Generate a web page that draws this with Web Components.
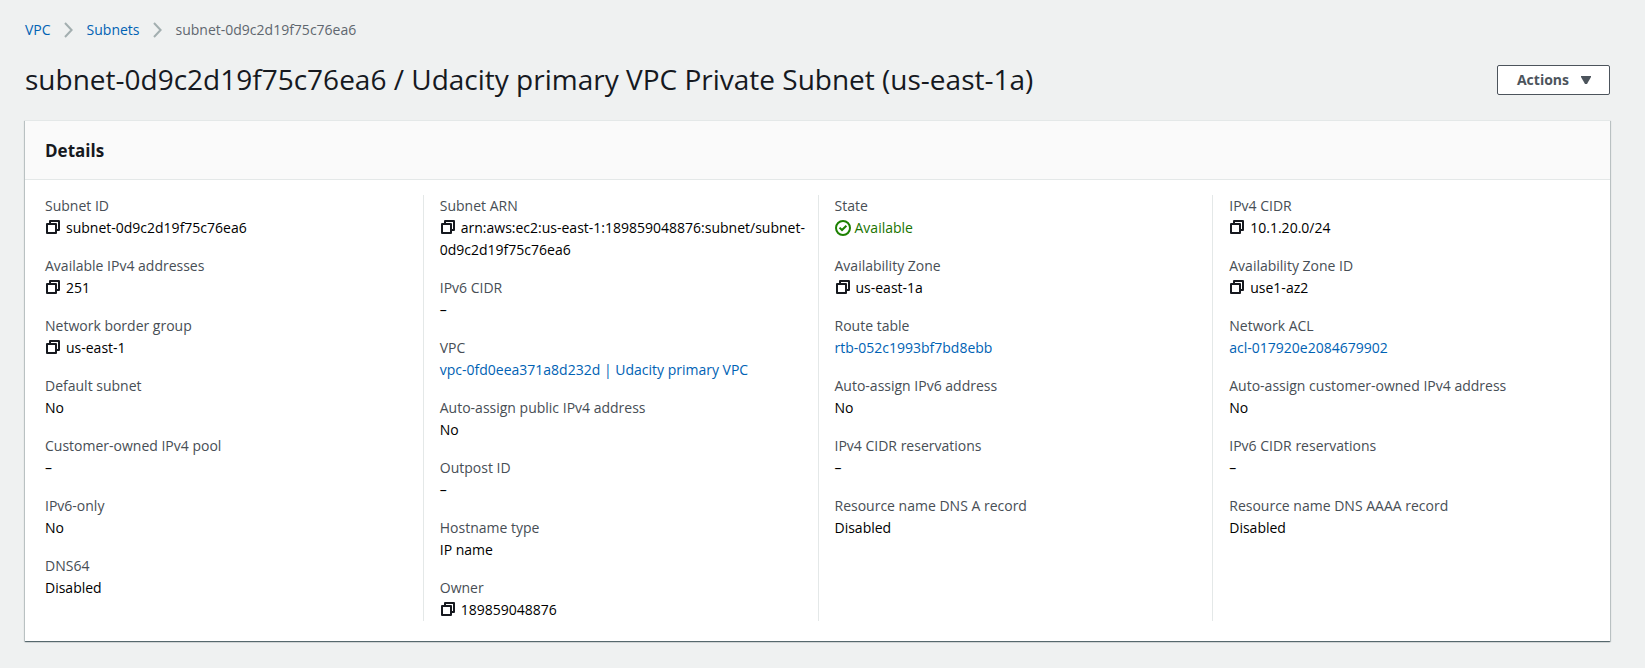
<!DOCTYPE html>
<html lang="en">
<head>
<meta charset="utf-8">
<title>Subnet details</title>
<style>
  body {
    margin: 0;
    background: #eff1f1;
    color: #16191f;
    font: 14px/22px "Open Sans", "Noto Sans", sans-serif;
    --link: #0062b4;
    --label: #474e55;
    --line: #e4e8e8;
  }
</style>
</head>
<body>
<subnet-page></subnet-page>

<script>
const define = (name, html, setup) => {
  const template = document.createElement('template');
  template.innerHTML = html.trim();
  customElements.define(name, class extends HTMLElement {
    constructor() {
      super();
      this.attachShadow({ mode: 'open' }).append(template.content.cloneNode(true));
    }
    connectedCallback() { if (setup) setup(this, this.shadowRoot); }
  });
};

/* Breadcrumb entry: a link followed by a chevron */
define('crumb-link', `
  <style>
    :host { display: flex; align-items: center; gap: 13px; }
    a { color: var(--link); text-decoration: none; }
    svg { display: block; width: 9px; height: 16px; }
  </style>
  <a href="#"><slot></slot></a>
  <svg viewBox="0 0 9 16" fill="none" stroke="#a3afb0" stroke-width="2" aria-hidden="true"><path d="M1 1 7.6 8 1 15"/></svg>
`);

define('crumb-trail', `
  <style>
    :host { display: block; }
    nav { display: flex; gap: 14px; color: #5f676f; }
  </style>
  <nav aria-label="Breadcrumb"><slot></slot></nav>
`);

define('menu-button', `
  <style>
    :host { display: block; flex: none; }
    button {
      display: flex; align-items: center; gap: 12px; padding: 3px 18px 3px 19px;
      font: inherit; font-weight: 700; color: #4c545c;
      background: #fff; border: 1px solid #4c545c; border-radius: 2px; cursor: pointer;
    }
    svg { display: block; width: 10px; height: 8px; }
  </style>
  <button type="button" aria-haspopup="menu"><slot></slot>
    <svg viewBox="0 0 10 8" aria-hidden="true"><path d="M0 0H10V1L6 8H4L0 1Z" fill="#4c545c"/></svg>
  </button>
`);

define('page-header', `
  <style>
    :host { display: flex; align-items: center; justify-content: space-between; gap: 24px; }
    h1 { margin: 0; padding-bottom: 2px; font-size: 28px; line-height: 34px; font-weight: 400; }
  </style>
  <h1><slot></slot></h1>
  <slot name="actions"></slot>
`);

define('info-card', `
  <style>
    :host {
      display: block; background: #fff; border-top: 1px solid var(--line);
      box-shadow: 0 1px 1px rgba(0,28,36,.5), 1px 1px 1px rgba(0,28,36,.15), -1px 1px 1px rgba(0,28,36,.15);
    }
    header { padding: 19px 20px 17px; background: #fafafa; border-bottom: 1px solid var(--line); }
    h2 { margin: 0; font-size: 17px; line-height: 22px; font-weight: 700; }
    .columns { display: grid; grid-template-columns: repeat(4, minmax(0, 1fr)); padding: 15px 3px 20px; }
  </style>
  <header><h2><slot name="title"></slot></h2></header>
  <div class="columns"><slot></slot></div>
`);

define('info-column', `
  <style>
    :host { display: flex; flex-direction: column; gap: 16px; padding-left: 16px; border-left: 1px solid var(--line); }
    :host(:first-of-type) { border-left-color: transparent; }
  </style>
  <slot></slot>
`);

define('copy-button', `
  <style>
    :host { display: inline; }
    button { display: inline-block; padding: 0; margin: 0 5px 0 0; border: 0; background: none; line-height: 0; vertical-align: -2px; cursor: pointer; }
    svg { display: block; width: 16px; height: 16px; }
  </style><button type="button" aria-label="Copy"><svg viewBox="0 0 16 16" fill="none" stroke="#16191f" stroke-width="2" stroke-linejoin="round" aria-hidden="true"><path d="M2 5h9v9H2z"/><path d="M5 5V2h9v9h-3"/></svg></button>
`);

define('status-ok', `
  <style>
    :host { display: inline; color: #197300; }
    svg { width: 16px; height: 16px; margin-right: 4px; vertical-align: -3px; }
  </style><svg viewBox="0 0 16 16" fill="none" stroke="#1d8102" stroke-width="2" aria-hidden="true"><circle cx="8" cy="8" r="7"/><path d="M4.5 7.6 7 10 11.4 5.8"/></svg><slot></slot>
`);

/* Label and value; attributes: label, copy, href */
define('info-field', `
  <style>
    :host { display: block; }
    dl, dd { margin: 0; }
    dt { color: var(--label); }
    dd { color: #000; }
    a { color: var(--link); text-decoration: none; }
  </style>
  <dl><dt></dt><dd><slot></slot></dd></dl>
`, (host, root) => {
  root.querySelector('dt').textContent = host.getAttribute('label');
  const slot = root.querySelector('slot');
  if (host.hasAttribute('copy')) slot.before(document.createElement('copy-button'));
  if (host.hasAttribute('href')) {
    const link = document.createElement('a');
    link.href = host.getAttribute('href');
    slot.replaceWith(link);
    link.append(slot);
  }
});

define('subnet-page', `
  <style>
    :host { display: block; padding: 19px 35px 27px 25px; }
    page-header { margin: 21px 0 22px; }
  </style>
  <crumb-trail>
    <crumb-link>VPC</crumb-link>
    <crumb-link>Subnets</crumb-link>
    <span aria-current="page">subnet-0d9c2d19f75c76ea6</span>
  </crumb-trail>
  <page-header>subnet-0d9c2d19f75c76ea6 / Udacity primary VPC Private Subnet (us-east-1a)<menu-button slot="actions">Actions</menu-button></page-header>
  <info-card>
    <span slot="title">Details</span>
    <info-column>
      <info-field label="Subnet ID" copy>subnet-0d9c2d19f75c76ea6</info-field>
      <info-field label="Available IPv4 addresses" copy>251</info-field>
      <info-field label="Network border group" copy>us-east-1</info-field>
      <info-field label="Default subnet">No</info-field>
      <info-field label="Customer-owned IPv4 pool">–</info-field>
      <info-field label="IPv6-only">No</info-field>
      <info-field label="DNS64">Disabled</info-field>
    </info-column>
    <info-column>
      <info-field label="Subnet ARN" copy>arn:aws:ec2:us-east-1:189859048876:subnet/subnet-<wbr>0d9c2d19f75c76ea6</info-field>
      <info-field label="IPv6 CIDR">–</info-field>
      <info-field label="VPC" href="#">vpc-0fd0eea371a8d232d | Udacity primary VPC</info-field>
      <info-field label="Auto-assign public IPv4 address">No</info-field>
      <info-field label="Outpost ID">–</info-field>
      <info-field label="Hostname type">IP name</info-field>
      <info-field label="Owner" copy>189859048876</info-field>
    </info-column>
    <info-column>
      <info-field label="State"><status-ok>Available</status-ok></info-field>
      <info-field label="Availability Zone" copy>us-east-1a</info-field>
      <info-field label="Route table" href="#">rtb-052c1993bf7bd8ebb</info-field>
      <info-field label="Auto-assign IPv6 address">No</info-field>
      <info-field label="IPv4 CIDR reservations">–</info-field>
      <info-field label="Resource name DNS A record">Disabled</info-field>
    </info-column>
    <info-column>
      <info-field label="IPv4 CIDR" copy>10.1.20.0/24</info-field>
      <info-field label="Availability Zone ID" copy>use1-az2</info-field>
      <info-field label="Network ACL" href="#">acl-017920e2084679902</info-field>
      <info-field label="Auto-assign customer-owned IPv4 address">No</info-field>
      <info-field label="IPv6 CIDR reservations">–</info-field>
      <info-field label="Resource name DNS AAAA record">Disabled</info-field>
    </info-column>
  </info-card>
</subnet-page>
`);
</script>
</body>
</html>
